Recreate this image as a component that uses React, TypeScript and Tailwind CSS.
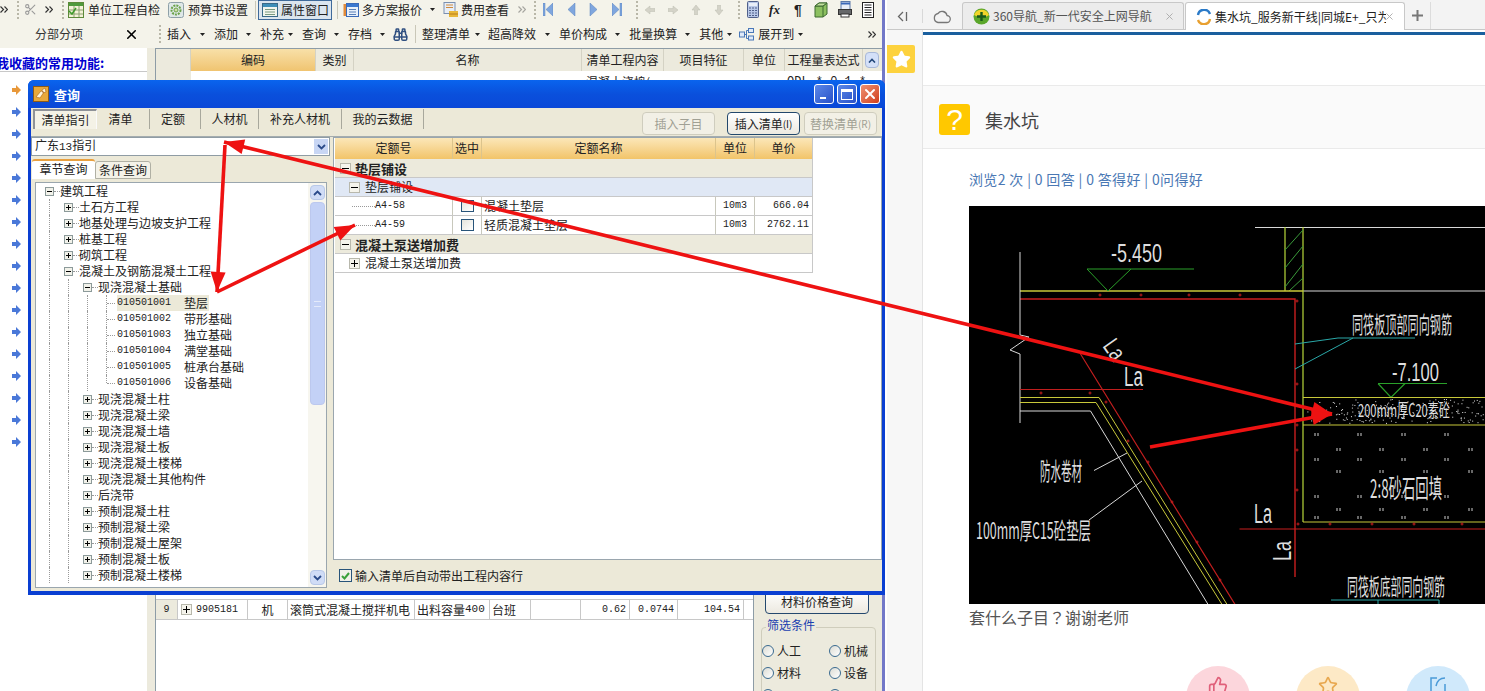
import { Binoculars, Scissors, Star, ThumbsUp, X } from "lucide-react";
import type { ReactNode } from "react";

// --- small toolbar drawings ---

function Chev({ className = "" }: { className?: string }) {
  return (
    <svg width="8" height="7" viewBox="0 0 8 7" className={`shrink-0 ${className}`} fill="none" stroke="#333" strokeWidth="1.2">
      <path d="M0.5 0.5 3.5 3.5 0.5 6.5M4.5 0.5 7.5 3.5 4.5 6.5" />
    </svg>
  );
}

function Grip({ className = "" }: { className?: string }) {
  return <span className={`h-[18px] w-[2px] shrink-0 border-l-2 border-dotted border-[#b9b7a8] ${className}`} />;
}

function Caret({ className = "" }: { className?: string }) {
  return (
    <svg width="5" height="3" viewBox="0 0 5 3" className={`shrink-0 ${className}`}>
      <path d="M0 0h5L2.5 3z" fill="#222" />
    </svg>
  );
}

function Sep({ className = "" }: { className?: string }) {
  return <span className={`h-[18px] w-px shrink-0 bg-[#c9c7b8] ${className}`} />;
}

function TableIcon({ className = "" }: { className?: string }) {
  return (
    <svg width="16" height="16" viewBox="0 0 16 16" className={`shrink-0 ${className}`}>
      <rect x="0.5" y="0.5" width="15" height="15" fill="#f4f2d8" stroke="#5d8a3a" />
      <rect x="1" y="1" width="14" height="3" fill="#4f9a3c" />
      <path d="M1 8h14M1 12h14M6 4v11M11 4v11" stroke="#8aa070" />
      <path d="M1 9l3 3 4-6" stroke="#3d9a2a" strokeWidth="1.5" fill="none" />
    </svg>
  );
}

function GearIcon({ className = "" }: { className?: string }) {
  return (
    <svg width="16" height="16" viewBox="0 0 16 16" className={`shrink-0 ${className}`}>
      <rect x="0.5" y="0.5" width="15" height="15" rx="2" fill="#dfe8e8" stroke="#8ea0a8" />
      <circle cx="8" cy="8" r="4.5" fill="none" stroke="#6aa24a" strokeWidth="2" strokeDasharray="2 1" />
      <circle cx="8" cy="8" r="2" fill="#cfe0a8" stroke="#6aa24a" />
    </svg>
  );
}

function WindowIcon({ className = "" }: { className?: string }) {
  return (
    <svg width="16" height="16" viewBox="0 0 16 16" className={`shrink-0 ${className}`}>
      <rect x="0.5" y="1.5" width="15" height="13" fill="#f2f6ee" stroke="#3a6a88" />
      <rect x="1" y="2" width="14" height="3" fill="#3f8fb8" />
      <path d="M3 7.5h10M3 10h10M3 12.5h10" stroke="#7a9a80" />
    </svg>
  );
}

function PlansIcon({ className = "" }: { className?: string }) {
  return (
    <svg width="16" height="16" viewBox="0 0 16 16" className={`shrink-0 ${className}`}>
      <rect x="0.5" y="2" width="3" height="12" fill="#e08a3a" />
      <rect x="3.5" y="1.5" width="12" height="13" fill="#e8f0fa" stroke="#3a6ab8" />
      <rect x="4" y="2" width="11" height="3" fill="#3a78d0" />
      <path d="M6 7.5h7M6 10h7M6 12.5h7" stroke="#5a80b8" />
    </svg>
  );
}

function CostIcon({ className = "" }: { className?: string }) {
  return (
    <svg width="16" height="16" viewBox="0 0 16 16" className={`shrink-0 ${className}`}>
      <rect x="1" y="0.5" width="11" height="11" fill="#e8eef6" stroke="#7a90b0" />
      <path d="M3 3h7M3 5.5h7" stroke="#d08a3a" />
      <rect x="6" y="9" width="9" height="2" fill="#e8b83a" />
      <rect x="6" y="11" width="9" height="2" fill="#d09a2a" />
      <rect x="6" y="13" width="9" height="2" fill="#e8b83a" />
    </svg>
  );
}

function NavIcon({ d }: { d: string }) {
  return (
    <svg width="10" height="13" viewBox="0 0 10 13" className="shrink-0">
      <path d={d} fill="#7fa6de" stroke="#5a82bc" strokeWidth="0.5" />
    </svg>
  );
}

function GrayArrow({ d }: { d: string }) {
  return (
    <svg width="10" height="10" viewBox="0 0 10 10" className="shrink-0">
      <path d={d} fill="#d4d3c8" stroke="#bdbcb0" strokeWidth="0.5" />
    </svg>
  );
}

function TreeBox({ plus }: { plus: boolean }) {
  return (
    <span className="relative z-10 flex h-[9px] w-[9px] shrink-0 items-center justify-center border border-[#8c9a9a] bg-[#f2f2ea]">
      <span className="absolute h-px w-[5px] bg-black" />
      {plus && <span className="absolute h-[5px] w-px bg-black" />}
    </span>
  );
}

function GridBox({ plus }: { plus: boolean }) {
  return (
    <span className="relative flex h-[11px] w-[11px] shrink-0 items-center justify-center border border-[#b8b8ac] bg-[#f5f4ec]">
      <span className="absolute h-px w-[7px] bg-black" />
      {plus && <span className="absolute h-[7px] w-px bg-black" />}
    </span>
  );
}

function Num({ children, className = "" }: { children: ReactNode; className?: string }) {
  return <span className={`font-['Liberation_Mono',monospace] text-[10px] ${className}`}>{children}</span>;
}

function Menu({ label, gap }: { label: string; gap: string }) {
  return (
    <>
      <span className="shrink-0 whitespace-nowrap">{label}</span>
      <Caret className={gap} />
    </>
  );
}

// --- main window ---

function AppToolbars() {
  return (
    <>
      <div className="flex h-[22px] shrink-0 items-center bg-[#f4f3ea] pb-[3px]">
        <Chev />
        <Grip className="ml-[9px]" />
        <Scissors size={13} className="ml-[5px] shrink-0 text-[#9a9a9a]" />
        <Chev className="ml-[8px]" />
        <Grip className="ml-[9px]" />
        <TableIcon className="ml-[4px]" />
        <span className="ml-[4px] shrink-0">单位工程自检</span>
        <GearIcon className="ml-[8px]" />
        <span className="ml-[4px] shrink-0">预算书设置</span>
        <Sep className="ml-[7px]" />
        <div className="ml-[2px] flex h-[20px] w-[74px] shrink-0 items-center border border-[#3f6a9a] bg-[#dbe5ee] pl-[3px]">
          <WindowIcon />
          <span className="ml-[3px]">属性窗口</span>
        </div>
        <Sep className="ml-[5px]" />
        <PlansIcon className="ml-[5px]" />
        <span className="ml-[3px] shrink-0">多方案报价</span>
        <Caret className="ml-[8px]" />
        <CostIcon className="ml-[8px]" />
        <span className="ml-[2px] shrink-0">费用查看</span>
        <Chev className="ml-[9px] opacity-40" />
        <Grip className="ml-[8px]" />
        <div className="ml-[7px] flex items-center gap-[13px]">
          <NavIcon d="M0 0h2v13H0zM10 0v13L3 6.5z" />
          <NavIcon d="M9 0v13L2 6.5z" />
          <NavIcon d="M1 0v13l7-6.5z" />
          <NavIcon d="M0 0v13l7-6.5zM8 0h2v13H8z" />
        </div>
        <Grip className="ml-[14px]" />
        <div className="ml-[7px] flex items-center gap-[13px]">
          <GrayArrow d="M0 5l5-4v2.5h5v3H5V9z" />
          <GrayArrow d="M10 5L5 1v2.5H0v3h5V9z" />
          <GrayArrow d="M5 0l4 5H6.5v5h-3V5H1z" />
          <GrayArrow d="M5 10l4-5H6.5V0h-3v5H1z" />
        </div>
        <Grip className="ml-[14px]" />
        <svg width="12" height="17" viewBox="0 0 12 17" className="ml-[7px] shrink-0">
          <rect x="0.5" y="0.5" width="11" height="16" rx="1" fill="#b8c8e8" stroke="#50608a" />
          <rect x="2" y="2" width="8" height="3" fill="#e8eef8" />
          <path d="M2 7h8M2 9.5h8M2 12h8M2 14.5h8" stroke="#50608a" strokeDasharray="2 1" />
        </svg>
        <span className="ml-[10px] w-[14px] shrink-0 font-['Liberation_Serif',serif] text-[13px] font-bold italic leading-none text-[#222]">fx</span>
        <span className="ml-[11px] w-[10px] shrink-0 font-['Liberation_Sans',sans-serif] text-[14px] font-bold leading-none text-[#222]">¶</span>
        <svg width="14" height="16" viewBox="0 0 14 16" className="ml-[10px] shrink-0">
          <path d="M1 4l4-3h8v11l-4 3H1z" fill="#8cc060" stroke="#3c6a30" />
          <path d="M1 4h8v11M9 4l4-3" fill="none" stroke="#3c6a30" />
          <path d="M1 4l4-3h8L9 4z" fill="#c4e0a0" stroke="#3c6a30" />
        </svg>
        <svg width="14" height="17" viewBox="0 0 14 17" className="ml-[10px] shrink-0">
          <rect x="3" y="0.5" width="9" height="8" fill="#e8eef8" stroke="#5a78a8" />
          <path d="M3 2.5h9" stroke="#3a68b8" strokeWidth="2" />
          <rect x="0.5" y="8.5" width="13" height="5" fill="#66686a" stroke="#333" />
          <rect x="3" y="13" width="8" height="3" fill="#fff" stroke="#333" />
        </svg>
        <svg width="12" height="16" viewBox="0 0 12 16" className="ml-[10px] shrink-0">
          <rect x="0.5" y="0.5" width="11" height="15" fill="#fff" stroke="#222" />
          <path d="M2.5 3h7M2.5 5.5h7M2.5 8h7M2.5 10.5h7M2.5 13h7" stroke="#222" />
        </svg>
      </div>
      <div className="flex h-[26px] shrink-0 items-center bg-[#f4f3ea] pb-[2px]">
        <div className="flex w-[155px] shrink-0 items-center pl-[35px] text-[#333]">
          <span>分部分项</span>
          <X size={15} strokeWidth={2.5} className="ml-[41px] text-black" />
        </div>
        <Grip className="ml-[4px]" />
        <div className="ml-[6px] flex min-w-0 flex-1 items-center">
          <Menu label="插入" gap="ml-[9px]" />
          <span className="ml-[9px]" />
          <Menu label="添加" gap="ml-[8px]" />
          <span className="ml-[9px]" />
          <Menu label="补充" gap="ml-[4px]" />
          <span className="ml-[9px]" />
          <Menu label="查询" gap="ml-[8px]" />
          <span className="ml-[9px]" />
          <Menu label="存档" gap="ml-[8px]" />
          <Binoculars size={15} className="ml-[8px] shrink-0 text-[#2f4f80]" strokeWidth={2.4} />
          <Sep className="ml-[7px]" />
          <span className="ml-[6px]" />
          <Menu label="整理清单" gap="ml-[5px]" />
          <span className="ml-[8px]" />
          <Menu label="超高降效" gap="ml-[9px]" />
          <span className="ml-[9px]" />
          <Menu label="单价构成" gap="ml-[8px]" />
          <span className="ml-[9px]" />
          <Menu label="批量换算" gap="ml-[8px]" />
          <span className="ml-[9px]" />
          <Menu label="其他" gap="ml-[4px]" />
          <svg width="15" height="13" viewBox="0 0 15 13" className="ml-[7px] shrink-0">
            <rect x="0.5" y="4" width="5" height="5" fill="#dfe9f8" stroke="#4a78b8" />
            <rect x="9.5" y="0.5" width="5" height="4" fill="#dfe9f8" stroke="#4a78b8" />
            <rect x="9.5" y="8" width="5" height="4" fill="#dfe9f8" stroke="#4a78b8" />
            <path d="M5.5 6.5h2M7.5 2.5v8M7.5 2.5h2M7.5 10.5h2" stroke="#4a78b8" fill="none" />
          </svg>
          <span className="ml-[4px]" />
          <Menu label="展开到" gap="ml-[4px]" />
          <Chev className="ml-[65px]" />
        </div>
      </div>
    </>
  );
}

const favorites = Array.from({ length: 17 }, (_, i) => i);

function FavoritesPanel() {
  return (
    <div className="w-[147px] shrink-0 bg-white">
      <div className="mt-[7px] h-[17px] overflow-hidden border-b border-[#c8c8c8]">
        <span className="-ml-[4px] block whitespace-nowrap text-[13px] font-bold leading-[16px] text-[#0000d0]">我收藏的常用功能:</span>
      </div>
      <div className="mt-[13px] flex flex-col gap-[12px] pl-[12px]">
        {favorites.map((i) => (
          <svg key={i} width="9" height="10" viewBox="0 0 9 10">
            <path d="M0 3h4V0l5 5-5 5V7H0z" fill={i === 0 ? "#e8983a" : "#4a78d8"} />
          </svg>
        ))}
      </div>
    </div>
  );
}

const headerCols = [
  { label: "", w: "w-[35px]" },
  { label: "编码", w: "w-[125px]", hot: true },
  { label: "类别", w: "w-[38px]" },
  { label: "名称", w: "w-[228px]" },
  { label: "清单工程内容", w: "w-[82px]" },
  { label: "项目特征", w: "w-[80px]" },
  { label: "单位", w: "w-[41px]" },
  { label: "工程量表达式", w: "w-[78px]" },
];

function MainTable() {
  return (
    <div className="flex min-w-0 flex-1 flex-col border-l border-t border-[#8d9ca6] bg-white">
      <div className="flex h-[22px] shrink-0 items-center bg-[#eceadd]">
        {headerCols.map((c) => (
          <div
            key={c.label || "blank"}
            className={`${c.w} flex h-full shrink-0 items-center justify-center border-r border-[#d4d2c4] ${c.hot ? "bg-linear-to-b from-[#f8e0a8] to-[#f0c470]" : ""}`}
          >
            {c.label}
          </div>
        ))}
        <div className="ml-[2px] flex h-[16px] w-[14px] items-center justify-center rounded-sm border border-[#a8b8d8] bg-[#d4e0f8]">
          <svg width="8" height="5" viewBox="0 0 8 5" fill="none" stroke="#24487a" strokeWidth="1.6">
            <path d="M1 4.5l3-3 3 3" />
          </svg>
        </div>
      </div>
      <div className="flex h-[22px] shrink-0 items-center bg-white">
        <div className="h-full w-[35px] bg-[#eceadd]" />
        <div className="w-[391px]" />
        <span className="w-[202px] pl-[4px]">混凝土浇捣(</span>
        <Num className="pl-[3px] text-[12px]">QDL * 0.1 *</Num>
      </div>
      <div className="flex min-h-0 flex-1">
        <div className="w-[597px] shrink-0">
          <div className="mt-[506px] flex h-[21px] items-center border-y border-[#c8c8c8]">
            <div className="flex h-full w-[22px] shrink-0 items-center justify-center border-r border-[#c8c8c8] bg-[#eceadd]">
              <Num>9</Num>
            </div>
            <div className="flex h-full w-[70px] shrink-0 items-center border-r border-[#c8c8c8] pl-[3px]">
              <GridBox plus />
              <Num className="ml-[4px]">9905181</Num>
            </div>
            <div className="flex h-full w-[40px] shrink-0 items-center justify-center border-r border-[#c8c8c8]">机</div>
            <div className="flex h-full w-[127px] shrink-0 items-center overflow-hidden whitespace-nowrap border-r border-[#c8c8c8] pl-[2px]">滚筒式混凝土搅拌机电</div>
            <div className="flex h-full w-[75px] shrink-0 items-center whitespace-nowrap border-r border-[#c8c8c8] pl-[2px]">
              出料容量<Num className="text-[11px]">400</Num>
            </div>
            <div className="flex h-full w-[41px] shrink-0 items-center border-r border-[#c8c8c8] pl-[2px]">台班</div>
            <div className="h-full w-[50px] shrink-0 border-r border-[#c8c8c8]" />
            <div className="flex h-full w-[49px] shrink-0 items-center justify-end border-r border-[#c8c8c8] pr-[3px]"><Num>0.62</Num></div>
            <div className="flex h-full w-[48px] shrink-0 items-center justify-end border-r border-[#c8c8c8] pr-[3px]"><Num>0.0744</Num></div>
            <div className="flex h-full w-[66px] shrink-0 items-center justify-end border-r border-[#c8c8c8] pr-[3px]"><Num>104.54</Num></div>
          </div>
        </div>
        <div className="flex-1 border-l border-[#8d9ca6] bg-[#eceadd]">
          <div className="ml-[11px] mt-[497px] flex h-[24px] w-[104px] items-center justify-center rounded-b-sm border border-[#24486e] bg-linear-to-b from-white to-[#ece9e0]">材料价格查询</div>
          <div className="relative ml-[7px] mt-[13px] h-[80px] w-[115px] rounded-sm border border-[#cfcdbc] pt-[16px]">
            <span className="absolute -top-[9px] left-[4px] bg-[#eceadd] px-px text-[#1a40b0]">筛选条件</span>
            <div className="grid grid-cols-[67px_1fr] gap-y-[8px]">
              {["人工", "机械", "材料", "设备", "", ""].map((t, i) => (
                <div key={i} className="flex h-[14px] items-center gap-[3px]">
                  <span className="h-[12px] w-[12px] rounded-full border border-[#3a6a90] bg-linear-to-br from-[#dcdcd4] to-white" />
                  <span>{t}</span>
                </div>
              ))}
            </div>
          </div>
        </div>
      </div>
    </div>
  );
}

// --- query dialog ---

type TreeItem = { level: number; text: string; plus?: boolean; code?: string; last?: boolean; hot?: boolean };

const tree: TreeItem[] = [
  { level: 0, text: "建筑工程" },
  { level: 1, text: "土石方工程", plus: true },
  { level: 1, text: "地基处理与边坡支护工程", plus: true },
  { level: 1, text: "桩基工程", plus: true },
  { level: 1, text: "砌筑工程", plus: true },
  { level: 1, text: "混凝土及钢筋混凝土工程" },
  { level: 2, text: "现浇混凝土基础" },
  { level: 3, code: "010501001", text: "垫层", hot: true },
  { level: 3, code: "010501002", text: "带形基础" },
  { level: 3, code: "010501003", text: "独立基础" },
  { level: 3, code: "010501004", text: "满堂基础" },
  { level: 3, code: "010501005", text: "桩承台基础" },
  { level: 3, code: "010501006", text: "设备基础", last: true },
  ...[
    "现浇混凝土柱",
    "现浇混凝土梁",
    "现浇混凝土墙",
    "现浇混凝土板",
    "现浇混凝土楼梯",
    "现浇混凝土其他构件",
    "后浇带",
    "预制混凝土柱",
    "预制混凝土梁",
    "预制混凝土屋架",
    "预制混凝土板",
    "预制混凝土楼梯",
  ].map((text) => ({ level: 2, text, plus: true })),
];

function TreeRow({ item }: { item: TreeItem }) {
  const guides = Array.from({ length: item.level }, (_, i) => i);
  return (
    <div className="flex h-[16px] items-center pl-[13px] whitespace-nowrap">
      {guides.map((g) => (
        <span key={g} className="h-full w-[19px] shrink-0 border-l border-dotted border-[#9a9a9a]" />
      ))}
      {item.code ? (
        <>
          <span className={`w-[11px] shrink-0 border-l border-dotted border-[#9a9a9a] ${item.last ? "h-1/2 self-start" : "h-full"}`} />
          <span className="-ml-[10px] mr-[2px] w-[8px] shrink-0 border-t border-dotted border-[#9a9a9a]" />
          <span className={`flex h-full items-center pr-[1px] ${item.hot ? "bg-[#ece9d8]" : ""}`}>
            <Num className="w-[67px] text-[#222]">{item.code}</Num>
            <span>{item.text}</span>
          </span>
        </>
      ) : (
        <>
          <span className="-ml-[4px]">
            <TreeBox plus={!!item.plus} />
          </span>
          <span className="w-[6px] shrink-0 border-t border-dotted border-[#9a9a9a]" />
          <span>{item.text}</span>
        </>
      )}
    </div>
  );
}

function ScrollBtn({ up }: { up: boolean }) {
  return (
    <div className="flex h-[15px] w-[15px] shrink-0 items-center justify-center rounded-sm border border-[#b8c8e8] bg-[#d0dcf6]">
      <svg width="9" height="6" viewBox="0 0 9 6" fill="none" stroke="#2a4a8a" strokeWidth="1.8">
        <path d={up ? "M1 5l3.5-3.5L8 5" : "M1 1l3.5 3.5L8 1"} />
      </svg>
    </div>
  );
}

function QueryTree() {
  return (
    <div className="ml-[4px] mt-[3px] flex h-[406px] w-[292px] border border-[#9aa6ae] bg-white">
      <div className="min-w-0 flex-1 overflow-hidden">
        {tree.map((item) => (
          <TreeRow key={item.text + (item.code ?? "")} item={item} />
        ))}
      </div>
      <div className="flex w-[18px] shrink-0 flex-col items-center bg-[#f7f6ef] py-[2px]">
        <ScrollBtn up />
        <div className="mt-[2px] flex h-[203px] w-[15px] items-center justify-center rounded-sm border border-[#bcc8ee] bg-[#c3d1f6]">
          <span className="h-[6px] w-[7px] border-y border-[#e4eafa]" />
        </div>
        <div className="flex-1" />
        <ScrollBtn up={false} />
      </div>
    </div>
  );
}

const quotaCols = "flex h-full shrink-0 items-center border-r border-[#c8c8bc]";

function QuotaRow({ code, name, unit, price }: { code: string; name: string; unit: string; price: string }) {
  return (
    <div className="flex h-[19px] items-center border-b border-[#c8c8c8]">
      <div className={`${quotaCols} w-[118px] pl-[17px]`}>
        <span className="w-[23px] border-t border-dotted border-[#999]" />
        <Num>{code}</Num>
      </div>
      <div className={`${quotaCols} w-[29px] justify-center`}>
        <span className="h-[12px] w-[13px] border border-[#28547a] bg-linear-to-br from-[#e4e4dc] to-white" />
      </div>
      <div className={`${quotaCols} w-[234px] pl-[2px]`}>{name}</div>
      <div className={`${quotaCols} w-[39px] justify-center`}><Num>{unit}</Num></div>
      <div className="flex h-full w-[58px] items-center justify-end pr-[3px]"><Num>{price}</Num></div>
    </div>
  );
}

function QuotaTable() {
  const head = "flex h-full shrink-0 items-center justify-center border-r border-[#dcc48c] pb-[2px]";
  return (
    <div className="ml-px w-[478px] border-r border-[#c8c8c8]">
      <div className="flex h-[21px] items-center bg-linear-to-b from-[#fbe7b8] to-[#f2c468]">
        <div className={`${head} w-[118px]`}>定额号</div>
        <div className={`${head} w-[29px]`}>选中</div>
        <div className={`${head} w-[234px]`}>定额名称</div>
        <div className={`${head} w-[39px]`}>单位</div>
        <div className="flex w-[58px] justify-center pb-[2px]">单价</div>
      </div>
      <div className="flex h-[19px] items-center border-b border-[#c8c8c8] bg-[#eceadc] pl-[5px] font-bold">
        <GridBox plus={false} />
        <span className="ml-[4px] text-[13px]">垫层铺设</span>
      </div>
      <div className="flex h-[19px] items-center border-b border-[#c8c8c8] bg-[#e0e8f5] pl-[14px]">
        <GridBox plus={false} />
        <span className="ml-[5px]">垫层铺设</span>
      </div>
      <QuotaRow code="A4-58" name="混凝土垫层" unit="10m3" price="666.04" />
      <QuotaRow code="A4-59" name="轻质混凝土垫层" unit="10m3" price="2762.11" />
      <div className="flex h-[19px] items-center border-b border-[#c8c8c8] bg-[#eceadc] pl-[5px] font-bold">
        <GridBox plus={false} />
        <span className="ml-[4px] text-[13px]">混凝土泵送增加费</span>
      </div>
      <div className="flex h-[19px] items-center border-b border-[#c8c8c8] pl-[14px]">
        <GridBox plus />
        <span className="ml-[5px]">混凝土泵送增加费</span>
      </div>
    </div>
  );
}

const dialogTabs = [
  { label: "清单", w: "w-[53px]", pad: "pr-[5px]" },
  { label: "定额", w: "w-[51px]", pad: "pr-[4px]" },
  { label: "人材机", w: "w-[58px]", pad: "" },
  { label: "补充人材机", w: "w-[83px]", pad: "" },
  { label: "我的云数据", w: "w-[82px]", pad: "" },
];

function QueryDialog() {
  return (
    <div className="absolute left-[28px] top-[80px] z-20 flex h-[515px] w-[857px] flex-col overflow-hidden rounded-t-[6px] bg-[#0a3fd2]">
      <div className="flex h-[28px] shrink-0 items-center bg-linear-to-b from-[#0a64ee] via-[#0a50dc] to-[#0a48d8] pl-[5px] pr-[5px]">
        <svg width="16" height="16" viewBox="0 0 16 16" className="shrink-0">
          <rect x="0.5" y="0.5" width="15" height="15" fill="#e8a83a" stroke="#8a5a1a" />
          <path d="M3 11l5-6 3 1-4 6zM9 4l3-2 1 4-3 1z" fill="#fff4d8" stroke="#a8641a" strokeWidth="0.6" />
        </svg>
        <span className="ml-[5px] text-[13px] font-bold text-white">查询</span>
        <div className="ml-auto flex items-center gap-[3px]">
          <div className="flex h-[20px] w-[20px] items-end justify-start rounded-[3px] border border-white bg-linear-to-br from-[#5c88e8] to-[#2a50c8] pb-[4px] pl-[5px]">
            <span className="h-[2px] w-[6px] bg-white" />
          </div>
          <div className="flex h-[20px] w-[20px] items-center justify-center rounded-[3px] border border-white bg-linear-to-br from-[#5c88e8] to-[#2a50c8]">
            <span className="h-[11px] w-[12px] border border-t-[3px] border-white" />
          </div>
          <div className="flex h-[20px] w-[20px] items-center justify-center rounded-[3px] border border-white bg-linear-to-br from-[#ee9070] to-[#d03c18]">
            <X size={16} strokeWidth={3} className="text-white" />
          </div>
        </div>
      </div>
      <div className="mx-[3px] mb-[4px] flex min-h-0 flex-1 flex-col bg-[#ece9d8]">
        <div className="flex h-[29px] shrink-0 items-start border-b border-[#a4acae] pl-[2px] pr-[5px] pt-px">
          <div className="flex h-[20px] w-[64px] shrink-0 items-center justify-center border-l-2 border-t-2 border-[#8e9298] border-r border-r-[#fafafa] bg-[#f4f2e6]">清单指引</div>
          {dialogTabs.map((t) => (
            <div key={t.label} className={`${t.w} ${t.pad} flex h-[20px] shrink-0 items-center justify-center border-r border-[#a8a89c]`}>
              {t.label}
            </div>
          ))}
          <div className="ml-auto mt-[3px] flex h-[23px] w-[73px] items-center justify-center rounded-sm border border-[#cfcdbe] bg-[#f2f0e6] text-[#a0a094]">插入子目</div>
          <div className="ml-[12px] mt-[3px] flex h-[23px] w-[73px] items-center justify-center rounded-sm border border-[#23486c] bg-linear-to-b from-white to-[#ece9e0]">
            插入清单<span className="text-[10px]">(I)</span>
          </div>
          <div className="ml-[4px] mt-[3px] flex h-[23px] w-[73px] items-center justify-center rounded-sm border border-[#cfcdbe] bg-[#f2f0e6] text-[#a0a094]">
            替换清单<span className="text-[10px]">(R)</span>
          </div>
        </div>
        <div className="flex min-h-0 flex-1">
          <div className="w-[302px] shrink-0">
            <div className="flex h-[19px] w-[299px] items-center justify-between border border-[#8f9ca4] bg-white pl-[3px] pr-px">
              <span className="pb-px">广东<Num className="text-[11px]">13</Num>指引</span>
              <div className="flex h-[15px] w-[14px] items-center justify-center bg-[#c8d6f4]">
                <svg width="9" height="6" viewBox="0 0 9 6" fill="none" stroke="#2a4a8a" strokeWidth="1.8">
                  <path d="M1 1l3.5 3.5L8 1" />
                </svg>
              </div>
            </div>
            <div className="mt-[3px] flex h-[20px] items-end pl-px">
              <div className="flex h-[20px] w-[63px] items-center justify-center rounded-t-[3px] border-t-2 border-[#e8a040] bg-white pb-[2px]">章节查询</div>
              <div className="flex h-[18px] w-[56px] items-center justify-center rounded-t-[3px] border border-[#b0b0a4] bg-[#f4f2e8]">条件查询</div>
            </div>
            <QueryTree />
          </div>
          <div className="flex min-w-0 flex-1 flex-col">
            <div className="h-[423px] w-[549px] border border-[#9aa6ae] bg-white">
              <QuotaTable />
            </div>
            <div className="flex flex-1 items-center pl-[6px]">
              <span className="flex h-[13px] w-[13px] items-center justify-center border border-[#28547a] bg-[#f0f0e8]">
                <svg width="9" height="8" viewBox="0 0 9 8" fill="none" stroke="#3aa03a" strokeWidth="2">
                  <path d="M1 4l2.5 2.5L8 1" />
                </svg>
              </span>
              <span className="ml-[3px]">输入清单后自动带出工程内容行</span>
            </div>
          </div>
        </div>
      </div>
    </div>
  );
}

// --- browser ---

function BrowserTabs() {
  return (
    <div className="flex h-[30px] shrink-0 items-end border-b border-[#c8c8c8] bg-[#f3f3f3] pl-[10px]">
      <div className="flex h-[26px] w-[65px] shrink-0 items-center">
        <svg width="11" height="11" viewBox="0 0 11 11" fill="none" stroke="#666" strokeWidth="1.3" className="shrink-0">
          <path d="M6 1 1.5 5.5 6 10M9.5 1v9" />
        </svg>
        <span className="ml-[14px] h-[14px] w-px bg-[#d8d8d8]" />
        <svg width="18" height="15" viewBox="0 0 18 15" fill="none" stroke="#777" strokeWidth="1.3" className="ml-[10px] shrink-0">
          <path d="M5 13.5h8.5a3.5 3.5 0 0 0 .5-7A5 5 0 0 0 5 4.5 4.6 4.6 0 0 0 5 13.5z" />
        </svg>
      </div>
      <div className="flex h-[27px] w-[222px] shrink-0 items-center rounded-t-[3px] border border-b-0 border-[#c8c8c8] bg-[#ececec] pl-[10px] text-[#555]">
        <svg width="17" height="17" viewBox="0 0 17 17" className="shrink-0">
          <circle cx="8.5" cy="8.5" r="8" fill="#5aa62a" />
          <path d="M1 7a8 8 0 0 1 15 0c-4 3-9 3-15 0z" fill="#f2d52a" />
          <path d="M8.5 4v9M4 8.5h9" stroke="#1a5a1a" strokeWidth="2.4" />
        </svg>
        <span className="ml-[3px] whitespace-nowrap leading-[16px]">360导航_新一代安全上网导航</span>
        <X size={11} className="ml-[12px] shrink-0 text-[#aaa]" />
      </div>
      <div className="relative -mb-px ml-px flex h-[28px] w-[220px] shrink-0 items-center overflow-hidden rounded-t-[3px] border border-b-0 border-[#c8c8c8] bg-white pl-[10px] text-[#222]">
        <svg width="16" height="16" viewBox="0 0 16 16" fill="none" strokeWidth="2.4" className="shrink-0">
          <path d="M2 6a6.2 6.2 0 0 1 12-1" stroke="#2a7ac8" />
          <path d="M14 10a6.2 6.2 0 0 1-12 1" stroke="#e8a030" />
        </svg>
        <span className="ml-[3px] w-[171px] overflow-hidden whitespace-nowrap leading-[18px]">集水坑_服务新干线|同城E+_只为您提供</span>
        <X size={11} className="-ml-[2px] shrink-0 text-[#aaa]" />
      </div>
      <div className="flex h-[27px] w-[26px] shrink-0 items-center justify-center border-r border-[#dcdcdc] text-[18px] leading-none text-[#777]">
        <svg width="11" height="11" viewBox="0 0 11 11" stroke="#777" strokeWidth="2">
          <path d="M5.5 0v11M0 5.5h11" />
        </svg>
      </div>
    </div>
  );
}

// deterministic speckle for the concrete hatch
const speck = (n: number, seed: number) =>
  Array.from({ length: n }, (_, i) => {
    const a = Math.abs(Math.sin(i * 12.9898 + seed) * 43758.5453);
    const b = Math.abs(Math.sin(i * 78.233 + seed) * 12543.2341);
    return [a - Math.floor(a), b - Math.floor(b)];
  });

const concrete = speck(190, 1);
const gravelCols = [1315, 1337, 1358, 1380, 1402, 1424, 1445, 1469];
const gravelRows = [433, 448, 458, 470, 495, 508, 516];
const redDots = [
  [1100, 295],
  [1141, 295],
  [1189, 295],
  [1240, 295],
  [1297, 301],
  [1297, 384],
  [1297, 425],
  [1297, 450],
  [1297, 490],
  [1041, 393],
  [1090, 393],
  [1106, 402],
  [1128, 441],
  [1148, 462],
  [1172, 502],
  [1197, 542],
  [1220, 580],
  [1298, 524],
  [1330, 524],
  [1372, 524],
  [1414, 524],
  [1462, 524],
];

function CadDrawing() {
  const txt = { fill: "#dedede", fontFamily: "'Noto Sans CJK SC', sans-serif", lengthAdjust: "spacingAndGlyphs" as const };
  const latin = { ...txt, fontFamily: "'Liberation Sans', sans-serif" };
  return (
    <svg viewBox="969 206 516 398" className="block h-[398px] w-[516px] shrink-0 bg-black" fill="none">
      <path d="M1255 227.5H1485M1303 291H1485" stroke="#d8d8d8" />
      <path d="M1285 227v64M1303 227V522" stroke="#b8d83a" strokeWidth="1.2" />
      <path d="M1285 250l18-20M1285 268l18-22M1285 287l18-23M1289 291l14-13" stroke="#3a9a3a" />
      <path d="M1020 291H1303" stroke="#c8c83a" strokeWidth="1.4" />
      <path d="M1020 299H1295V577" stroke="#c81e1e" strokeWidth="1.4" />
      <path d="M1020 252V335L1029 337 1010 350 1020 354V423" stroke="#d8d8d8" />
      <path d="M1087 269H1194M1087 269L1108 291 1131 269" stroke="#2aa02a" />
      <path d="M1020 389.5H1143M1080.5 354L1236 606" stroke="#c01e1e" strokeWidth="1.2" />
      <path d="M1020 397.5H1099L1228 606M1020 402.5H1096L1223 606" stroke="#c8c83a" />
      <path d="M1020 411H1090.5L1209 606" stroke="#d8d8d8" />
      <path d="M1295 344L1338 338H1415M1295 369L1353 338" stroke="#2aa8a8" />
      <path d="M1378 383.5H1447M1378 383.5L1391 397.5 1405 383.5" stroke="#2aa02a" strokeWidth="1.2" />
      <path d="M1303 397.5H1485M1303 425H1485M1303 522H1485" stroke="#c8c83a" strokeWidth="1.2" />
      <path d="M1239.5 529H1485" stroke="#c81e1e" strokeWidth="1.2" />
      <path d="M1094 470.5L1127 453M1089 520L1142 481" stroke="#d8d8d8" />
      <path d="M1331 600H1439M1378 600V606M1439 600V606" stroke="#2aa8a8" />
      {redDots.map(([x, y]) => (
        <circle key={`${x}-${y}`} cx={x} cy={y} r="1" stroke="#c81e1e" />
      ))}
      {concrete.map(([a, b], i) => (
        <rect key={i} x={1304 + a * 180} y={399 + b * 24} width="1" height="1" fill="#e0e0e0" />
      ))}
      {gravelRows.map((y, r) =>
        gravelCols.map((x, c) =>
          (r + c) % 2 === 0 ? <path key={`${r}-${c}`} d={`M${x} ${y}v3M${x + 3} ${y}v3`} stroke="#cfcfcf" /> : null,
        ),
      )}
      <text x="1111" y="262" fontSize="26" textLength="51" {...latin}>-5.450</text>
      <text x="1392" y="381" fontSize="25" textLength="47" {...latin}>-7.100</text>
      <text x="1124" y="386" fontSize="27" textLength="19" {...latin}>La</text>
      <text x="1254" y="523" fontSize="27" textLength="18" {...latin}>La</text>
      <text fontSize="24" textLength="20" transform="translate(1102 346) rotate(55)" {...latin}>La</text>
      <text fontSize="26" textLength="20" transform="translate(1291 561) rotate(-90)" {...latin}>La</text>
      <text x="1352" y="333" fontSize="23" textLength="100" {...txt}>同筏板顶部同向钢筋</text>
      <text x="1358" y="417" fontSize="18" textLength="92" {...txt}>200mm厚C20素砼</text>
      <text x="1370" y="498" fontSize="26" textLength="72" {...txt}>2:8砂石回填</text>
      <text x="1040" y="480" fontSize="24" textLength="42" {...txt}>防水卷材</text>
      <text x="976" y="539" fontSize="23" textLength="115" {...txt}>100mm厚C15砼垫层</text>
      <text x="1347" y="595" fontSize="23" textLength="98" {...txt}>同筏板底部同向钢筋</text>
    </svg>
  );
}

function BrowserPane() {
  return (
    <div className="ml-[2px] flex min-w-0 flex-1 flex-col">
      <BrowserTabs />
      <div className="flex min-h-0 flex-1">
        <div className="w-[36px] shrink-0 border-r border-[#e4e4e4] bg-[#f7f7f7] pt-[15px]">
          <div className="flex h-[28px] w-[28px] items-center justify-center rounded-r-[2px] bg-[#fdd23e]">
            <Star size={19} fill="#fff" stroke="#fff" />
          </div>
        </div>
        <div className="min-w-0 flex-1 overflow-hidden bg-white pt-[2px]">
          <div className="h-[3px] bg-[#1a5f9e]" />
          <div className="mt-[50px] flex h-[64px] items-center border-y border-[#eaeaea] bg-[#fafafa] pl-[16px] pt-[5px]">
            <div className="flex h-[31px] w-[31px] items-center justify-center rounded-[3px] bg-[#ffc800] font-['Liberation_Sans',sans-serif] text-[30px] font-light leading-none text-white">?</div>
            <span className="ml-[15px] text-[18px] text-[#444]">集水坑</span>
          </div>
          <div className="pl-[46px]">
            <div className="mt-[20px] h-[20px] text-[14px] leading-[20px] tracking-[0.35px] text-[#4a78b4]">浏览2 次 | 0 回答 | 0 答得好 | 0问得好</div>
            <div className="mt-[17px] w-[516px]">
              <CadDrawing />
            </div>
            <div className="mt-[2px] whitespace-nowrap font-['Noto_Sans_CJK_TC',sans-serif] text-[16px] leading-[22px] text-[#555]">套什么子目？谢谢老师</div>
            <div className="mt-[38px] flex">
              <div className="ml-[217px] flex h-[64px] w-[64px] shrink-0 justify-center rounded-full bg-[#fcd6dc] pt-[10px]">
                <ThumbsUp size={20} className="text-[#e0607a]" />
              </div>
              <div className="ml-[46px] flex h-[64px] w-[64px] shrink-0 justify-center rounded-full bg-[#fde9c6] pt-[10px]">
                <Star size={20} className="text-[#e8a850]" />
              </div>
              <div className="ml-[46px] flex h-[64px] w-[64px] shrink-0 justify-center rounded-full bg-[#d0e9fb] pt-[10px]">
                <svg width="18" height="22" viewBox="0 0 18 22" fill="none" stroke="#4a9ad8" strokeWidth="1.5">
                  <path d="M8 2H2v18h14V8M7 10c1-5 4-8 9-8" />
                </svg>
              </div>
            </div>
          </div>
        </div>
      </div>
    </div>
  );
}

// --- annotation arrows, drawn over both windows ---

function Arrow({ from, to, both }: { from: number[]; to: number[]; both?: boolean }) {
  const head = (tip: number[], back: number[]) => {
    const dx = back[0] - tip[0];
    const dy = back[1] - tip[1];
    const len = Math.hypot(dx, dy);
    const ux = dx / len;
    const uy = dy / len;
    const bx = tip[0] + ux * 20;
    const by = tip[1] + uy * 20;
    return `${tip[0]},${tip[1]} ${bx - uy * 7.5},${by + ux * 7.5} ${bx + uy * 7.5},${by - ux * 7.5}`;
  };
  return (
    <>
      <line x1={from[0]} y1={from[1]} x2={to[0]} y2={to[1]} stroke="#ee1212" strokeWidth="3.6" />
      <polygon points={head(to, from)} fill="#ee1212" />
      {both && <polygon points={head(from, to)} fill="#ee1212" />}
    </>
  );
}

function Annotations() {
  return (
    <svg viewBox="0 0 1485 691" className="pointer-events-none absolute inset-0 z-30 h-[691px] w-[1485px]">
      <Arrow from={[224, 142]} to={[1332, 414]} both />
      <Arrow from={[225, 145]} to={[217, 292]} />
      <Arrow from={[217, 292]} to={[355, 225]} />
      <Arrow from={[1150, 447]} to={[1332, 414]} />
    </svg>
  );
}

export default function App() {
  return (
    <div className="relative flex h-[691px] w-[1485px] overflow-hidden bg-white font-['Noto_Sans_CJK_SC','Liberation_Sans',sans-serif] text-[12px] leading-none text-[#222]">
      <div className="flex w-[885px] shrink-0 flex-col border-r-[3px] border-[#7278c8]">
        <AppToolbars />
        <div className="flex min-h-0 flex-1">
          <FavoritesPanel />
          <div className="w-[8px] shrink-0 bg-[#eceadd]" />
          <MainTable />
        </div>
      </div>
      <BrowserPane />
      <QueryDialog />
      <Annotations />
    </div>
  );
}
